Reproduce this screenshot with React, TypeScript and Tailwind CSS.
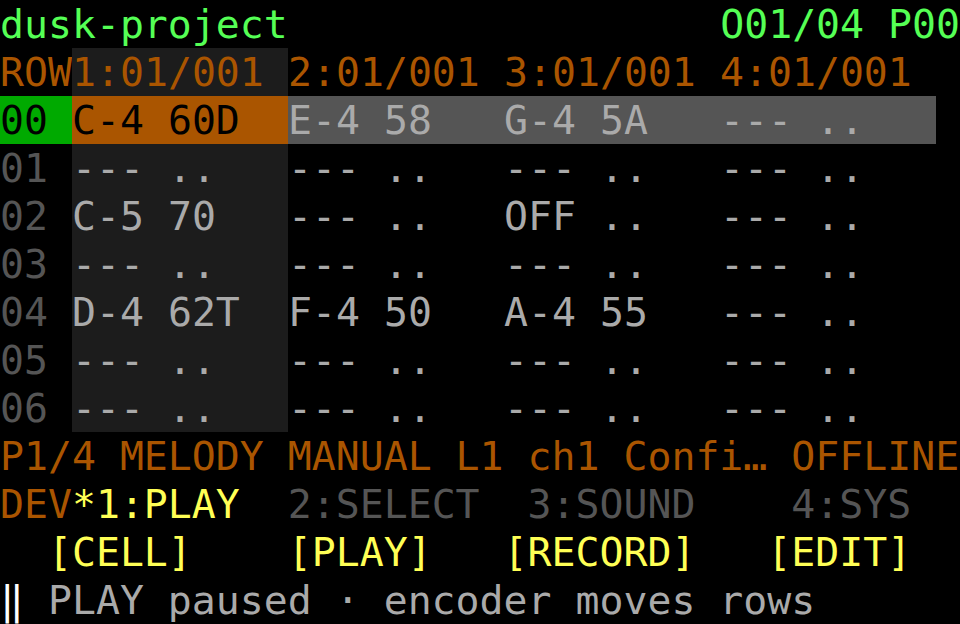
import React from "react";

type Row = { n: string; cells: string[] };

const rows: Row[] = [
    { n: "00", cells: ["C-4 60D", "E-4 58", "G-4 5A", "--- .."] },
    { n: "01", cells: ["--- ..", "--- ..", "--- ..", "--- .."] },
    { n: "02", cells: ["C-5 70", "--- ..", "OFF ..", "--- .."] },
    { n: "03", cells: ["--- ..", "--- ..", "--- ..", "--- .."] },
    { n: "04", cells: ["D-4 62T", "F-4 50", "A-4 55", "--- .."] },
    { n: "05", cells: ["--- ..", "--- ..", "--- ..", "--- .."] },
    { n: "06", cells: ["--- ..", "--- ..", "--- ..", "--- .."] },
];

const headers = ["1:01/001", "2:01/001", "3:01/001", "4:01/001"];

function Line({ children, className = "" }: { children: React.ReactNode; className?: string }) {
    return <div className={`flex h-[48px] items-center whitespace-pre ${className}`}>{children}</div>;
}

export default function App() {
    return (
        <div
            className="w-[960px] h-[624px] overflow-hidden bg-black text-[39.85px] leading-[48px]"
            style={{ fontFamily: '"DejaVu Sans Mono", "Liberation Mono", monospace' }}
        >
            {/* title */}
            <Line className="justify-between text-[#55ff55]">
                <span>dusk-project</span>
                <span>O01/04 P00</span>
            </Line>

            {/* track headers */}
            <Line className="text-[#aa5500]">
                <span className="w-[72px] shrink-0">ROW</span>
                {headers.map((h, i) => (
                    <span key={h} className={`w-[216px] shrink-0 h-full ${i === 0 ? "bg-[#1c1c1c]" : ""}`}>{h}</span>
                ))}
            </Line>

            {/* pattern rows */}
            {rows.map((r, ri) => {
                const cur = ri === 0;
                return (
                    <Line key={r.n} className="text-[#aaaaaa]">
                        <span className={`w-[72px] shrink-0 h-full ${cur ? "bg-[#00aa00] text-black" : "text-[#555555]"}`}>{r.n}</span>
                        {r.cells.map((c, ci) => {
                            let cls = "";
                            if (cur && ci === 0) cls = "bg-[#aa5500] text-black";
                            else if (cur) cls = "bg-[#555555]";
                            else if (ci === 0) cls = "bg-[#1c1c1c]";
                            return (
                                <span key={ci} className={`w-[216px] shrink-0 h-full ${cls}`}>{c}</span>
                            );
                        })}
                    </Line>
                );
            })}

            {/* status */}
            <Line className="text-[#aa5500]">P1/4 MELODY MANUAL L1 ch1 Confi… OFFLINE</Line>

            {/* pages */}
            <Line>
                <span className="text-[#aa5500]">DEV</span>
                <span className="text-[#ffff55]">*1:PLAY</span>
                <span className="text-[#555555]">{"  2:SELECT  3:SOUND    4:SYS"}</span>
            </Line>

            {/* soft keys */}
            <Line className="text-[#ffff55]">{"  [CELL]    [PLAY]   [RECORD]   [EDIT]"}</Line>

            {/* footer */}
            <Line>
                <span className="text-white">‖</span>
                <span className="text-[#aaaaaa]">{" PLAY paused · encoder moves rows"}</span>
            </Line>
        </div>
    );
}
